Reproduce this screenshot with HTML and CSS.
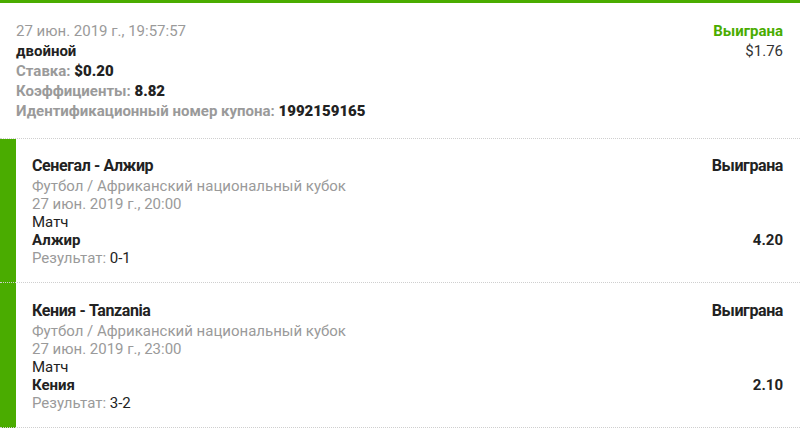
FILE: index.html
```html
<!DOCTYPE html>
<html lang="ru">
<head>
  <meta charset="UTF-8" />
  <title>Купон</title>
  <link rel="stylesheet" href="styles.css">
</head>
<body>
  <div class="coupon">
    <div class="summary">
      <div class="row">
        <span class="muted">27 июн. 2019 г., 19:57:57</span>
        <span class="won">Выиграна</span>
      </div>
      <div class="row">
        <span class="strong">двойной</span>
        <span class="amount">$1.76</span>
      </div>
      <div class="row"><span class="label">Ставка: <b>$0.20</b></span></div>
      <div class="row"><span class="label">Коэффициенты: <b>8.82</b></span></div>
      <div class="row"><span class="label">Идентификационный номер купона: <b>1992159165</b></span></div>
    </div>

    <div class="selection">
      <div class="row title-row">
        <span class="title">Сенегал - Алжир</span>
        <span class="title">Выиграна</span>
      </div>
      <div class="muted">Футбол / Африканский национальный кубок</div>
      <div class="muted">27 июн. 2019 г., 20:00</div>
      <div>Матч</div>
      <div class="row">
        <span class="strong">Алжир</span>
        <span class="strong">4.20</span>
      </div>
      <div class="muted">Результат: <span class="dark">0-1</span></div>
    </div>

    <div class="selection">
      <div class="row title-row">
        <span class="title">Кения - Tanzania</span>
        <span class="title">Выиграна</span>
      </div>
      <div class="muted">Футбол / Африканский национальный кубок</div>
      <div class="muted">27 июн. 2019 г., 23:00</div>
      <div>Матч</div>
      <div class="row">
        <span class="strong">Кения</span>
        <span class="strong">2.10</span>
      </div>
      <div class="muted">Результат: <span class="dark">3-2</span></div>
    </div>
  </div>
</body>
</html>
```

FILE: styles.css
```css
body {
  margin: 0;
  font-family: Roboto, "Liberation Sans", sans-serif;
  font-size: 15px;
  color: #222;
  background: #fff;
}

.coupon {
  border-top: 3px solid #4aac00;
}

.row {
  display: flex;
  justify-content: space-between;
}

.summary {
  padding: 18px 17px 17px 16px;
  line-height: 20px;
  border-bottom: 1px dotted #cfcfcf;
}

.muted {
  color: #9a9a9a;
}

.dark {
  color: #222;
}

.strong {
  font-weight: bold;
  color: #222;
}

.label {
  font-weight: bold;
  color: #9a9a9a;
}

.label b {
  color: #222;
}

.won {
  color: #4aac00;
  font-weight: bold;
}

.amount {
  color: #333;
}

/* green stripe on the left of each event */
.selection {
  background: linear-gradient(to right, #4aac00 16px, #fff 16px);
  padding: 17px 17px 15px 32px;
  line-height: 18px;
  border-bottom: 1px dotted #cfcfcf;
}

.selection + .selection {
  padding-top: 18px;
}

.title-row {
  line-height: 20px;
  margin-bottom: 1px;
}

.title {
  font-size: 16px;
  font-weight: bold;
  color: #222;
  letter-spacing: -0.4px;
}
```
